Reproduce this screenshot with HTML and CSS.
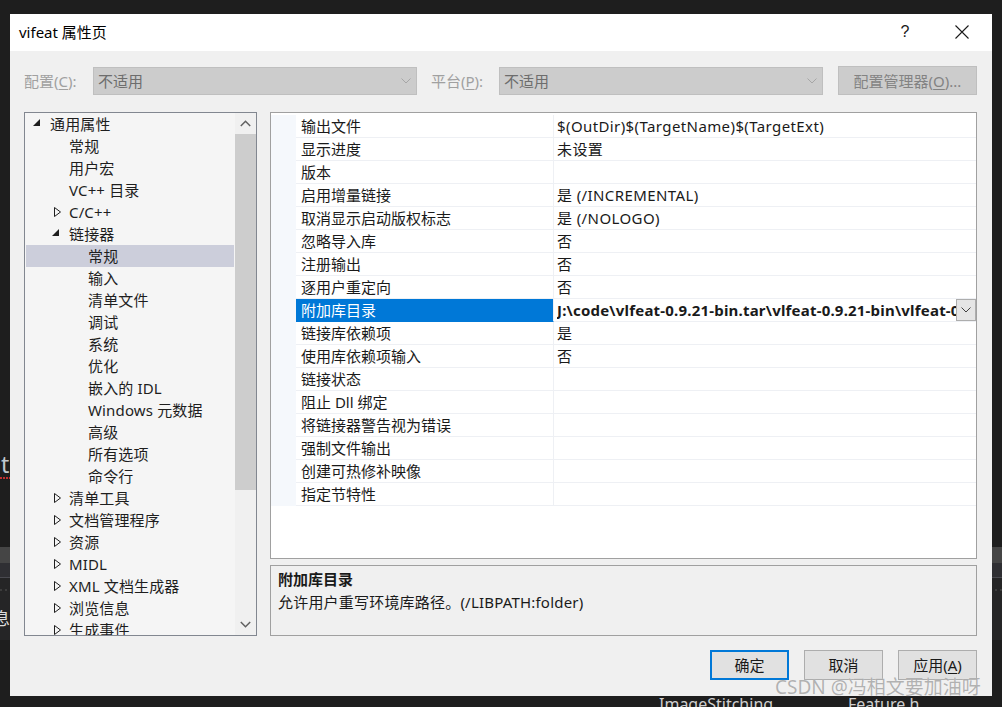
FILE: index.html
```html
<!DOCTYPE html>
<html lang="zh-CN">
<head>
<meta charset="utf-8">
<title>vifeat 属性页</title>
<link rel="stylesheet" href="styles.css">
</head>
<body>
<div class="desktop">
  <div class="editor-bg">
    <span class="frag frag-t">t</span>
    <span class="squiggle"></span>
    <div class="band band-a"></div>
    <div class="band band-b"></div>
    <div class="band band-line"></div>
    <div class="band band-dots"></div>
    <div class="band band-c"></div>
    <span class="frag frag-xi">息</span>
  </div>

  <div class="dialog">
    <div class="titlebar">
      <span class="title">vifeat 属性页</span>
      <span class="help">?</span>
      <span class="close">
        <svg width="14" height="14" viewBox="0 0 14 14"><path d="M0.5 0.5 L13.5 13.5 M13.5 0.5 L0.5 13.5" stroke="#1a1a1a" stroke-width="1.1" fill="none"/></svg>
      </span>
    </div>

    <div class="dlg-body">
      <div class="config-row">
        <span class="cfg-label">配置(<u>C</u>):</span>
        <div class="combo"><span class="combo-text">不适用</span>
          <svg class="chev" width="10" height="6" viewBox="0 0 10 6"><path d="M0.5 0.5 L5 5 L9.5 0.5" stroke="#a6a6a6" fill="none"/></svg>
        </div>
        <span class="cfg-label cfg-plat">平台(<u>P</u>):</span>
        <div class="combo"><span class="combo-text">不适用</span>
          <svg class="chev" width="10" height="6" viewBox="0 0 10 6"><path d="M0.5 0.5 L5 5 L9.5 0.5" stroke="#a6a6a6" fill="none"/></svg>
        </div>
        <div class="btn-mgr">配置管理器(<u>O</u>)...</div>
      </div>

      <div class="main">
        <div class="tree">
          <ul class="tree-list">
            <li class="node l0"><span class="tw"><svg class="tri-exp" width="8" height="8" viewBox="0 0 8 8"><path d="M7 0 L7 7 L0 7 Z" fill="#1e1e1e"/></svg></span>通用属性</li>
            <li class="node l1"><span class="tw"></span>常规</li>
            <li class="node l1"><span class="tw"></span>用户宏</li>
            <li class="node l1"><span class="tw"></span>VC++ 目录</li>
            <li class="node l1"><span class="tw"><svg class="tri-col" width="8" height="10" viewBox="0 0 8 10"><path d="M0.5 0.5 L6.5 5 L0.5 9.5 Z" stroke="#1e1e1e" fill="none"/></svg></span>C/C++</li>
            <li class="node l1"><span class="tw"><svg class="tri-exp" width="8" height="8" viewBox="0 0 8 8"><path d="M7 0 L7 7 L0 7 Z" fill="#1e1e1e"/></svg></span>链接器</li>
            <li class="node l2 selected"><span class="tw"></span>常规</li>
            <li class="node l2"><span class="tw"></span>输入</li>
            <li class="node l2"><span class="tw"></span>清单文件</li>
            <li class="node l2"><span class="tw"></span>调试</li>
            <li class="node l2"><span class="tw"></span>系统</li>
            <li class="node l2"><span class="tw"></span>优化</li>
            <li class="node l2"><span class="tw"></span>嵌入的 IDL</li>
            <li class="node l2"><span class="tw"></span>Windows 元数据</li>
            <li class="node l2"><span class="tw"></span>高级</li>
            <li class="node l2"><span class="tw"></span>所有选项</li>
            <li class="node l2"><span class="tw"></span>命令行</li>
            <li class="node l1"><span class="tw"><svg class="tri-col" width="8" height="10" viewBox="0 0 8 10"><path d="M0.5 0.5 L6.5 5 L0.5 9.5 Z" stroke="#1e1e1e" fill="none"/></svg></span>清单工具</li>
            <li class="node l1"><span class="tw"><svg class="tri-col" width="8" height="10" viewBox="0 0 8 10"><path d="M0.5 0.5 L6.5 5 L0.5 9.5 Z" stroke="#1e1e1e" fill="none"/></svg></span>文档管理程序</li>
            <li class="node l1"><span class="tw"><svg class="tri-col" width="8" height="10" viewBox="0 0 8 10"><path d="M0.5 0.5 L6.5 5 L0.5 9.5 Z" stroke="#1e1e1e" fill="none"/></svg></span>资源</li>
            <li class="node l1"><span class="tw"><svg class="tri-col" width="8" height="10" viewBox="0 0 8 10"><path d="M0.5 0.5 L6.5 5 L0.5 9.5 Z" stroke="#1e1e1e" fill="none"/></svg></span>MIDL</li>
            <li class="node l1"><span class="tw"><svg class="tri-col" width="8" height="10" viewBox="0 0 8 10"><path d="M0.5 0.5 L6.5 5 L0.5 9.5 Z" stroke="#1e1e1e" fill="none"/></svg></span>XML 文档生成器</li>
            <li class="node l1"><span class="tw"><svg class="tri-col" width="8" height="10" viewBox="0 0 8 10"><path d="M0.5 0.5 L6.5 5 L0.5 9.5 Z" stroke="#1e1e1e" fill="none"/></svg></span>浏览信息</li>
            <li class="node l1"><span class="tw"><svg class="tri-col" width="8" height="10" viewBox="0 0 8 10"><path d="M0.5 0.5 L6.5 5 L0.5 9.5 Z" stroke="#1e1e1e" fill="none"/></svg></span>生成事件</li>
          </ul>
          <div class="vscroll">
            <div class="sb-arrow"><svg width="11" height="7" viewBox="0 0 11 7"><path d="M0.8 6 L5.5 1.3 L10.2 6" stroke="#606060" stroke-width="1.5" fill="none"/></svg></div>
            <div class="sb-track"><div class="sb-thumb"></div></div>
            <div class="sb-arrow"><svg width="11" height="7" viewBox="0 0 11 7"><path d="M0.8 1 L5.5 5.7 L10.2 1" stroke="#606060" stroke-width="1.5" fill="none"/></svg></div>
          </div>
        </div>

        <div class="right-col">
          <div class="pgrid">
            <div class="prow"><div class="pg"></div><div class="pn">输出文件</div><div class="pv">$(OutDir)$(TargetName)$(TargetExt)</div></div>
            <div class="prow"><div class="pg"></div><div class="pn">显示进度</div><div class="pv">未设置</div></div>
            <div class="prow"><div class="pg"></div><div class="pn">版本</div><div class="pv"></div></div>
            <div class="prow"><div class="pg"></div><div class="pn">启用增量链接</div><div class="pv">是 (/INCREMENTAL)</div></div>
            <div class="prow"><div class="pg"></div><div class="pn">取消显示启动版权标志</div><div class="pv">是 (/NOLOGO)</div></div>
            <div class="prow"><div class="pg"></div><div class="pn">忽略导入库</div><div class="pv">否</div></div>
            <div class="prow"><div class="pg"></div><div class="pn">注册输出</div><div class="pv">否</div></div>
            <div class="prow"><div class="pg"></div><div class="pn">逐用户重定向</div><div class="pv">否</div></div>
            <div class="prow sel"><div class="pg"></div><div class="pn">附加库目录</div><div class="pv"><span class="pv-text">J:\code\vlfeat-0.9.21-bin.tar\vlfeat-0.9.21-bin\vlfeat-0.9.21\bin\win64</span><span class="dd"><svg width="10" height="6" viewBox="0 0 10 6"><path d="M0.5 0.5 L5 5 L9.5 0.5" stroke="#404040" fill="none"/></svg></span></div></div>
            <div class="prow"><div class="pg"></div><div class="pn">链接库依赖项</div><div class="pv">是</div></div>
            <div class="prow"><div class="pg"></div><div class="pn">使用库依赖项输入</div><div class="pv">否</div></div>
            <div class="prow"><div class="pg"></div><div class="pn">链接状态</div><div class="pv"></div></div>
            <div class="prow"><div class="pg"></div><div class="pn">阻止 Dll 绑定</div><div class="pv"></div></div>
            <div class="prow"><div class="pg"></div><div class="pn">将链接器警告视为错误</div><div class="pv"></div></div>
            <div class="prow"><div class="pg"></div><div class="pn">强制文件输出</div><div class="pv"></div></div>
            <div class="prow"><div class="pg"></div><div class="pn">创建可热修补映像</div><div class="pv"></div></div>
            <div class="prow"><div class="pg"></div><div class="pn">指定节特性</div><div class="pv"></div></div>
          </div>
          <div class="desc">
            <div class="desc-title">附加库目录</div>
            <div class="desc-text">允许用户重写环境库路径。(/LIBPATH:folder)</div>
          </div>
        </div>
      </div>

      <div class="buttons">
        <div class="btn btn-default">确定</div>
        <div class="btn">取消</div>
        <div class="btn">应用(<u>A</u>)</div>
      </div>
    </div>
  </div>

  <div class="tabs">
    <span class="tab tab-1">ImageStitching</span>
    <span class="tab tab-2">Feature.h</span>
  </div>

  <div class="watermark">CSDN @冯相文要加油呀</div>
</div>
</body>
</html>
```

FILE: styles.css
```css
* { box-sizing: border-box; }
html, body { margin: 0; padding: 0; }
body {
  background: #1e1e1e;
  font-family: "Noto Sans", "Noto Sans CJK SC", sans-serif;
  font-size: 15px;
  color: #1a1a1a;
  overflow: hidden;
}
u { text-decoration: underline; text-underline-offset: 2px; }

.desktop {
  position: relative;
  width: 1002px;
  height: 707px;
  padding: 14px 10px 0 10px;
  overflow: hidden;
}

/* editor window behind the dialog */
.editor-bg { position: absolute; inset: 0; z-index: 0; }
.band { position: absolute; left: 0; right: 0; }
.band-a { top: 547px; height: 16px; background: #454545; }
.band-b { top: 563px; height: 14px; background: #2f2f33; }
.band-line { top: 577px; height: 1px; background: #4a4a50; }
.band-dots { top: 589px; height: 2px; z-index: 1; background: repeating-linear-gradient(90deg, #3c3c3c 0 2px, transparent 2px 5px); }
.band-c { top: 578px; height: 62px; background: #252526; }
.frag { position: absolute; color: #c8c8c8; font-family: "Noto Sans", "Noto Sans CJK SC", sans-serif; }
.frag-t { left: 1px; top: 450px; font-size: 23px; line-height: 28px; color: #c0c8d0; }
.squiggle { position: absolute; left: 0; top: 477px; width: 10px; height: 2px; background: repeating-linear-gradient(90deg, #c03030 0 2px, transparent 2px 3px); }
.frag-xi { left: -7px; top: 609px; font-size: 17px; line-height: 20px; color: #dcdcdc; z-index: 2; }

/* dialog */
.dialog {
  position: relative;
  z-index: 1;
  width: 982px;
  height: 682px;
  background: #f0f0f0;
  display: flex;
  flex-direction: column;
}
.titlebar {
  height: 37px;
  flex: none;
  background: #ffffff;
  display: flex;
  align-items: center;
  padding-left: 9px;
}
.title { flex: 1; font-size: 15px; color: #000; line-height: 20px; margin-top: -2px; }
.help { width: 58px; text-align: center; font-size: 16px; color: #1a1a1a; font-family: "Liberation Sans", sans-serif; margin-top: -2px; }
.close { width: 56px; margin-right: 2px; display: flex; justify-content: center; align-items: center; margin-top: -2px; }

.dlg-body {
  flex: 1;
  display: flex;
  flex-direction: column;
  padding: 15px 15px 0 14px;
}

.config-row { display: flex; align-items: center; height: 29px; }
.cfg-label { width: 69px; color: #a0a0a0; line-height: 20px; }
.cfg-plat { width: 68px; margin-left: 14px; }
.combo {
  width: 324px;
  height: 28px;
  background: #cccccc;
  border: 1px solid #bfbfbf;
  display: flex;
  align-items: center;
  padding: 0 4px 0 4px;
}
.combo-text { flex: 1; color: #6d6d6d; line-height: 20px; }
.chev { margin-right: 1px; }
.btn-mgr {
  margin-left: 15px;
  width: 139px;
  height: 29px;
  background: #cccccc;
  border: 1px solid #bfbfbf;
  color: #838383;
  display: flex;
  align-items: center;
  justify-content: center;
  line-height: 20px;
}

.main { display: flex; gap: 13px; margin-top: 17px; height: 524px; }

.tree {
  width: 233px;
  height: 524px;
  border: 1px solid #828790;
  background: #f5f5f5;
  display: flex;
  overflow: hidden;
}
.tree-list {
  list-style: none;
  margin: 0;
  padding: 0 1px;
  width: 210px;
  flex: none;
  overflow: hidden;
}
.node {
  height: 22px;
  display: flex;
  align-items: center;
  white-space: nowrap;
  color: #1e1e1e;
  line-height: 22px;
  letter-spacing: 0.15px;
}
.node.l0 { padding-left: 8px; }
.node.l1 { padding-left: 27px; }
.node.l2 { padding-left: 46px; }
.tw { width: 16px; flex: none; display: flex; align-items: center; }
.tri-exp { margin-left: -1px; margin-top: -2px; }
.tri-col { margin-left: 1px; }
.node.selected { background: #cccedb; }

.vscroll { width: 21px; flex: none; display: flex; flex-direction: column; background: #f0f0f0; }
.sb-arrow { height: 21px; display: flex; align-items: center; justify-content: center; flex: none; }
.sb-track { flex: 1; }
.sb-thumb { height: 356px; background: #cdcdcd; }

.right-col { flex: 1; display: flex; flex-direction: column; gap: 6px; }
.pgrid {
  height: 447px;
  border: 1px solid #a0a0a0;
  background: #ffffff;
  padding-top: 2px;
}
.prow {
  display: grid;
  grid-template-columns: 25px 258px 1fr;
  height: 23px;
}
.pg { background: #f5f8fc; }
.pn, .pv {
  border-bottom: 1px solid #eef0f4;
  line-height: 22px;
  white-space: nowrap;
  overflow: hidden;
}
.pn { padding-left: 5px; border-right: 1px solid #eef0f4; }
.pv { padding-left: 3px; letter-spacing: 0.4px; }
.prow.sel .pn { background: #0078d7; color: #ffffff; border-bottom-color: #0078d7; }
.prow.sel .pv { display: flex; padding-right: 0; }
.pv-text { flex: 1; overflow: hidden; font-weight: bold; white-space: nowrap; letter-spacing: 0.2px; }
.dd {
  width: 20px;
  height: 22px;
  flex: none;
  background: #e5e5e5;
  border: 1px solid #adadad;
  display: flex;
  align-items: center;
  justify-content: center;
}

.desc {
  flex: 1;
  border: 1px solid #a0a0a0;
  background: #f0f0f0;
  padding: 2px 7px 0;
}
.desc-title { font-weight: bold; line-height: 23px; }
.desc-text { line-height: 23px; letter-spacing: 0.2px; }

.buttons { display: flex; justify-content: flex-end; gap: 15px; margin-top: 14px; }
.btn {
  width: 79px;
  height: 30px;
  background: #e1e1e1;
  border: 1px solid #adadad;
  display: flex;
  align-items: center;
  justify-content: center;
  color: #1a1a1a;
  line-height: 20px;
}
.btn-default { border: 2px solid #0078d7; }

.tabs { position: relative; height: 11px; z-index: 1; }
.tab { position: absolute; top: -2px; font-size: 16px; line-height: 20px; color: #d0d0d0; font-family: "Noto Sans", sans-serif; }
.tab-1 { left: 649px; }
.tab-2 { left: 838px; }

.watermark {
  position: absolute;
  z-index: 3;
  left: 775px;
  top: 676px;
  font-size: 19px;
  line-height: 22px;
  color: rgba(165, 165, 165, 0.85);
  text-shadow: 0 0 1px rgba(255, 255, 255, 0.6);
  white-space: nowrap;
}
```
